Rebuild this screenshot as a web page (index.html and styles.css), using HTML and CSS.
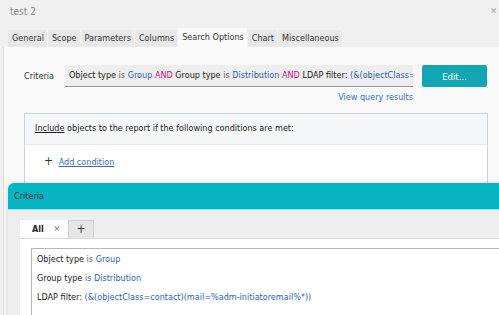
FILE: index.html
```html
<!DOCTYPE html>
<html>
<head>
    <title>test 2</title>
    <link rel="stylesheet" href="styles.css">
</head>
<body>
    <div class="window">
        <div class="titlebar">
            <span class="title">test 2</span>
            <span class="close">&#x2715;</span>
        </div>

        <div class="tabs">
            <span class="tab">General</span>
            <span class="tab">Scope</span>
            <span class="tab">Parameters</span>
            <span class="tab">Columns</span>
            <span class="tab active">Search Options</span>
            <span class="tab">Chart</span>
            <span class="tab">Miscellaneous</span>
        </div>

        <div class="page">
            <div class="criteria-row">
                <span class="label">Criteria</span>
                <div class="query-box">
                    Object type <span class="op">is</span> <span class="val">Group</span>
                    <span class="and">AND</span> Group type <span class="op">is</span> <span class="val">Distribution</span>
                    <span class="and">AND</span> LDAP filter: <span class="val">(&amp;(objectClass=co</span>
                </div>
                <button class="edit-button">Edit...</button>
            </div>
            <div class="view-row">
                <a class="link">View query results</a>
            </div>

            <div class="cond-box">
                <div class="cond-head"><u>Include</u> objects to the report if the following conditions are met:</div>
                <div class="cond-body">
                    <span class="plus">+</span> <a class="link underline">Add condition</a>
                </div>
            </div>
        </div>
    </div>

    <div class="dialog">
        <div class="dialog-head">Criteria</div>
        <div class="dialog-body">
            <div class="dtabs">
                <span class="dtab active"><b>All</b> <span class="x">&#x2715;</span></span>
                <span class="dtab add">+</span>
            </div>
            <div class="dpanel">
                <div class="list">
                    <p>Object type <span class="op">is</span> <span class="val">Group</span></p>
                    <p>Group type <span class="op">is</span> <span class="val">Distribution</span></p>
                    <p>LDAP filter: <span class="val">(&amp;(objectClass=contact)(mail=%adm-initiatoremail%*))</span></p>
                </div>
            </div>
        </div>
    </div>
</body>
</html>
```

FILE: styles.css
```css
body{
    margin:0;
    background-color:#f0f0f0;
    font-family:"DejaVu Sans Condensed","Liberation Sans",sans-serif;
    font-size:9px;
    color:#222;
    width:499px;
    height:315px;
    overflow:hidden;
    position:relative;
}

.window{
    padding-left:3px;
}

.titlebar{
    height:30px;
    display:flex;
    justify-content:space-between;
    align-items:flex-start;
    padding:6px 0 0 7px;
    box-sizing:border-box;
}

.title{
    color:#8a8a8a;
    font-size:10px;
}

.close{
    color:#aaa;
    font-size:9px;
    margin-right:2px;
}

.tabs{
    display:flex;
    padding-left:5px;
    height:17px;
    align-items:flex-end;
}

.tab{
    background-color:#e8e8e8;
    padding:0 3px 0 4px;
    height:17px;
    line-height:17px;
    border-right:1px solid #f2f2f2;
    color:#333;
}

.tab.active{
    background-color:#fafafa;
    height:19px;
    line-height:18px;
}

.page{
    background-color:#f9f9f9;
    border-left:1px solid #dcdcdc;
    height:268px;
    padding:18px 0 0 20px;
    box-sizing:border-box;
}

.criteria-row{
    display:flex;
    align-items:center;
}

.label{
    width:41px;
    color:#333;
}

.query-box{
    width:348px;
    height:22px;
    line-height:21px;
    padding:0 4px;
    background-color:#eeeeee;
    border-bottom:1px solid #9a9a9a;
    box-sizing:border-box;
    white-space:nowrap;
    overflow:hidden;
    color:#222;
}

.op{
    color:#666;
}

.val{
    color:#2f5fb8;
}

.and{
    color:#c8207e;
}

.edit-button{
    margin-left:9px;
    width:65px;
    height:22px;
    background-color:#12a6b2;
    color:white;
    border:none;
    border-radius:2px;
    font-family:inherit;
    font-size:9.5px;
}

.view-row{
    width:389px;
    text-align:right;
    margin-top:5px;
    height:16px;
}

.link{
    color:#3c6fb8;
}

.underline{
    text-decoration:underline;
}

.cond-box{
    margin-top:5px;
    width:464px;
    height:80px;
    border:1px solid #c8d4de;
    background-color:white;
    box-sizing:border-box;
}

.cond-head{
    height:30px;
    line-height:28px;
    padding-left:10px;
    background-color:#f6f7f8;
    border-bottom:1px solid #e4e8ec;
    color:#222;
}

.cond-body{
    padding:9px 0 0 19px;
}

.plus{
    font-size:12px;
    color:#333;
    margin-right:3px;
}

.dialog{
    position:absolute;
    left:8px;
    top:183px;
    right:-10px;
    height:142px;
    border-radius:6px 0 0 0;
    overflow:hidden;
    box-shadow:0 0 4px rgba(0,0,0,0.2);
}

.dialog-head{
    height:26px;
    line-height:26px;
    padding-left:6px;
    background-color:#06b4c2;
    border-bottom:1px solid #8fe8ee;
    color:#1f3a3d;
    font-size:9px;
}

.dialog-body{
    background-color:#eeeeee;
    height:115px;
    padding:10px 0 0 12px;
    box-sizing:border-box;
}

.dtabs{
    display:flex;
    height:18px;
}

.dtab{
    height:18px;
    line-height:18px;
    box-sizing:border-box;
}

.dtab.active{
    background-color:white;
    width:48px;
    padding-left:12px;
}

.dtab.active b{
    color:#222;
}

.x{
    color:#888;
    margin-left:7px;
    font-size:9px;
}

.dtab.add{
    width:26px;
    text-align:center;
    background-color:#e6e6e6;
    border:1px solid #d0d0d0;
    border-bottom:none;
    font-size:12px;
    line-height:16px;
    color:#333;
}

.dpanel{
    background-color:white;
    height:90px;
    padding:9px 0 0 11px;
    border-top:1px solid #dcdcdc;
}

.list{
    border:1px solid #b8b8b8;
    border-right:none;
    height:80px;
    padding:1px 0 0 5px;
}

.list p{
    margin:0;
    height:19px;
    line-height:19px;
}
```
